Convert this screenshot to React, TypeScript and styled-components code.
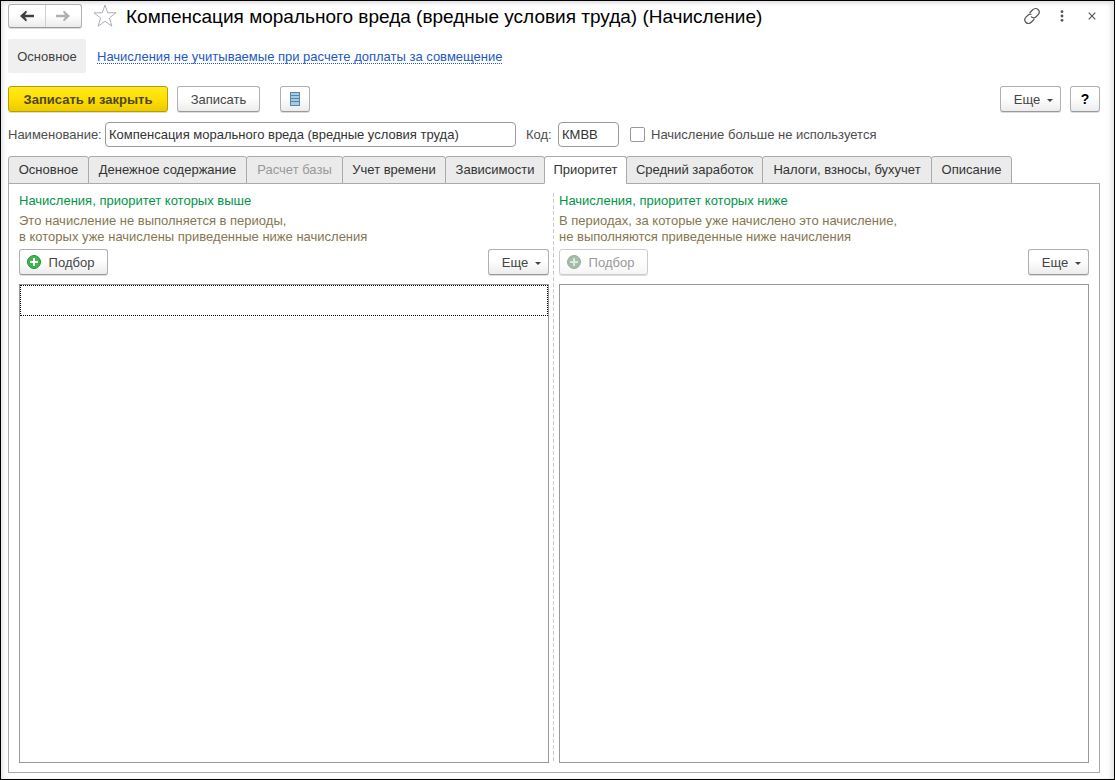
import React, { useState } from "react";
import styled, { createGlobalStyle, css } from "styled-components";

const GlobalStyle = createGlobalStyle`
  *, *::before, *::after { box-sizing: border-box; }
  body {
    margin: 0;
    background: #fff;
    color: #4d4d4d;
    font: 13px/16px "Liberation Sans", Arial, sans-serif;
  }
  button, input { font: inherit; color: inherit; margin: 0; }
`;

const Window = styled.main`
  display: flex;
  flex-direction: column;
  min-height: 100vh;
  margin-right: 1px;
  padding: 3px 14px 6px 7px;
  border: 1px solid #000;
  background: #fff;
  box-shadow: inset 0 4px 4px -2px #e0dce0, inset 4px 0 4px -2px #e8e4e6, inset -5px 0 5px -2px #e4e4e4;
`;

const TitleBar = styled.header`
  display: flex;
  align-items: center;
  height: 24px;
`;

const raised = css`
  border: 1px solid #b0b0b0;
  border-bottom-color: #999;
  border-radius: 3px;
  background: linear-gradient(#fff 0%, #fff 45%, #ececec 100%);
  box-shadow: 0 1px 0 #ddd;
`;

const History = styled.nav`
  ${raised}
  display: flex;
  width: 74px;
  height: 24px;
`;

const HistoryButton = styled.button`
  flex: 1;
  display: grid;
  place-items: center;
  padding: 0;
  border: 0;
  background: none;
  color: #404040;
  & + & { border-left: 1px solid #d0d0d0; }
  &:disabled { color: #b0b0b0; }
`;

const IconButton = styled.button`
  display: grid;
  place-items: center;
  width: 30px;
  height: 24px;
  padding: 0;
  border: 0;
  background: none;
  color: #555;
`;

const StarButton = styled(IconButton)`
  width: 24px;
  margin: 0 9px 0 11px;
`;

const Title = styled.h1`
  flex: 1;
  margin: 0;
  padding-top: 2px;
  color: #000;
  font-size: 19px;
  line-height: 24px;
  font-weight: 400;
  white-space: nowrap;
`;

const WindowTools = styled.div`
  display: flex;
  margin-right: -7px;
`;

const Sections = styled.nav`
  display: flex;
  align-items: center;
  gap: 11px;
  margin-top: 11px;
`;

const Section = styled.span`
  padding: 10px 0 8px;
  border-radius: 2px;
  background: #f0f0f0;
  color: #404040;
  width: 78px;
  text-align: center;
`;

const SectionLink = styled.a`
  padding-top: 2px;
  color: #2457c5;
  text-decoration: underline dotted 1px;
  text-decoration-skip-ink: none;
  text-underline-offset: 2px;
`;

const CommandBar = styled.div`
  display: flex;
  margin-top: 13px;
`;

const Button = styled.button<{ $width: number; $primary?: boolean }>`
  ${raised}
  display: flex;
  align-items: center;
  justify-content: center;
  width: ${(p) => p.$width}px;
  height: 26px;
  padding: 0;
  color: #444;
  line-height: 18px;
  white-space: nowrap;
  ${(p) =>
    p.$primary &&
    css`
      border-color: #b89c00;
      background: linear-gradient(#ffe924, #ffdf00 50%, #ecca00);
      color: #4d4622;
      font-weight: 700;
    `}
  &:disabled { color: #999; border-color: #ccc; background: linear-gradient(#fff 45%, #f5f5f5); }
`;

const ButtonText = styled.span`
  padding-top: 2px;
`;

const Group = styled.div<{ $gap: number }>`
  display: flex;
  gap: ${(p) => p.$gap}px;
  & + & { margin-left: 20px; }
`;

const EndGroup = styled.div`
  display: flex;
  gap: 9px;
  margin-left: auto;
`;

const Caret = styled.span`
  margin: 2px 0 0 7px;
  border: 3px solid transparent;
  border-top-color: currentColor;
  border-bottom: 0;
`;

const MoreLabel = styled(ButtonText)`
  margin-left: 6px;
`;

const HelpMark = styled.span`
  color: #000;
  font-size: 14px;
  font-weight: 700;
`;

const Fields = styled.div`
  display: flex;
  align-items: center;
  margin-top: 10px;
`;

const FieldLabel = styled.label`
  width: 97px;
  flex: none;
  white-space: nowrap;
`;

const CodeLabel = styled(FieldLabel)`
  width: 32px;
  margin-left: 10px;
`;

const TextInput = styled.input<{ $width: number }>`
  flex: 0 1 ${(p) => p.$width}px;
  min-width: 0;
  height: 25px;
  padding: 0 3px;
  border: 1px solid #999;
  border-radius: 4px;
  background: #fff;
  color: #333;
  outline: 0;
`;

const CheckLabel = styled.label`
  display: flex;
  align-items: center;
  gap: 6px;
  margin-left: 11px;
  white-space: nowrap;
`;

const Checkbox = styled.input`
  appearance: none;
  width: 15px;
  height: 15px;
  border: 1px solid #999;
  border-radius: 2px;
  background: #fff;
  &:checked { background: #888; }
`;

const TabList = styled.div`
  display: flex;
  margin-top: 9px;
`;

const Tab = styled.button<{ $width: number }>`
  position: relative;
  width: ${(p) => p.$width}px;
  height: 28px;
  margin-bottom: -1px;
  padding: 0;
  border: 1px solid #aaa;
  border-radius: 3px 3px 0 0;
  background: #ebebeb;
  color: #333;
  white-space: nowrap;
  & + & { margin-left: -1px; }
  &:disabled { color: #999; }
  &[aria-selected="true"] {
    border-bottom-color: #fff;
    background: #fff;
  }
`;

const Panel = styled.section`
  flex: 1;
  display: grid;
  grid-template-columns: 1fr 10px 1fr;
  padding: 9px 10px 9px;
  border: 1px solid #aaa;
`;

const Divider = styled.div`
  margin-left: 4px;
  width: 1px;
  background: repeating-linear-gradient(#ccc 0 4px, transparent 4px 6px);
`;

const Column = styled.div`
  display: flex;
  flex-direction: column;
  min-width: 0;
`;

const Heading = styled.h2`
  margin: 0 0 4px;
  color: #009646;
  font-size: 13px;
  line-height: 16px;
  font-weight: 400;
`;

const Note = styled.p`
  margin: 0;
  color: #85774f;
`;

const ColumnBar = styled.div`
  display: flex;
  justify-content: space-between;
  margin: 4px 0 9px;
`;

const PickLabel = styled(ButtonText)`
  margin: 0 6px 0 8px;
`;

const List = styled.div`
  flex: 1;
  border: 1px solid #999;
`;

const CurrentRow = styled.div`
  height: 31px;
  border: 1px dotted #000;
`;

const Arrow = ({ back }: { back?: boolean }) => (
  <svg width="14" height="12" viewBox="0 0 14 12" fill="currentColor">
    <path d={back ? "M0 6L6 .5L7 2L5 4.700H14V7.300H5L7 10L6 11.500z" : "M14 6L8 .5L7 2L9 4.700H0V7.300H9L7 10L8 11.500z"} />
  </svg>
);

const Star = () => (
  <svg width="24" height="24" viewBox="0 0 24 24" fill="none" stroke="#aaafb5">
    <path d="M12 1l2.700 7.800h8.300l-6.600 5.200 2.500 8.200-6.900-4.900-6.900 4.900 2.500-8.200-6.600-5.200h8.300z" />
  </svg>
);

const LinkIcon = () => (
  <svg width="18" height="18" viewBox="0 0 18 18" fill="none" stroke="currentColor" strokeWidth="1.200" strokeLinecap="round">
    <path d="M7 5.500L9.500 3C11.500 1 13.800 1.200 15 2.500C16.500 4 16.600 6.200 15 7.800L12.800 10C11.500 11.200 9.500 11 8.500 9.800" />
    <path d="M11 12.500L8.500 15C6.500 17 4.200 16.800 3 15.500C1.500 14 1.400 11.800 3 10.200L5.200 8C6 7.300 7 7 8 7.300" />
  </svg>
);

const Dots = () => (
  <svg width="4" height="12" viewBox="0 0 4 12" fill="currentColor">
    <circle cx="2" cy="1.700" r="1.400" />
    <circle cx="2" cy="6" r="1.400" />
    <circle cx="2" cy="10.300" r="1.400" />
  </svg>
);

const Cross = () => (
  <svg width="8" height="8" viewBox="0 0 8 8" stroke="currentColor" strokeWidth="1.200">
    <path d="M.7.7l6.600 6.600M7.300.7L.7 7.300" />
  </svg>
);

const ListIcon = () => (
  <svg width="10" height="14" viewBox="0 0 10 14">
    <rect width="10" height="14" fill="#5b87a6" />
    <path d="M1 2h8M1 5h8M1 8h8" stroke="#a9cbe2" strokeWidth="2" />
    <path d="M1 11.500h8" stroke="#a9cbe2" strokeWidth="3" />
  </svg>
);

const Plus = ({ muted }: { muted?: boolean }) => (
  <svg width="14" height="14" viewBox="0 0 14 14">
    <circle cx="7" cy="7" r="6.500" fill={muted ? "#a3bda8" : "#3fb54d"} stroke={muted ? "#96ae9b" : "#22903a"} />
    <path d="M7 3v8M3 7h8" stroke={muted ? "#dde6df" : "#fff"} strokeWidth="2" />
  </svg>
);

const More = () => (
  <Button type="button" $width={61} aria-haspopup="menu">
    <MoreLabel>Еще</MoreLabel>
    <Caret />
  </Button>
);

const tabs = [
  { name: "Основное", width: 81 },
  { name: "Денежное содержание", width: 159 },
  { name: "Расчет базы", width: 97, disabled: true },
  { name: "Учет времени", width: 104 },
  { name: "Зависимости", width: 100 },
  { name: "Приоритет", width: 83 },
  { name: "Средний заработок", width: 137 },
  { name: "Налоги, взносы, бухучет", width: 170 },
  { name: "Описание", width: 81 },
];

interface PriorityColumnProps {
  title: string;
  note: [string, string];
  disabled?: boolean;
  children?: React.ReactNode;
}

const PriorityColumn = ({ title, note, disabled, children }: PriorityColumnProps) => (
  <Column>
    <Heading>{title}</Heading>
    <Note>
      {note[0]}
      <br />
      {note[1]}
    </Note>
    <ColumnBar>
      <Button type="button" $width={89} disabled={disabled}>
        <Plus muted={disabled} />
        <PickLabel>Подбор</PickLabel>
      </Button>
      <More />
    </ColumnBar>
    <List aria-label={title}>{children}</List>
  </Column>
);

export default function App() {
  const [active, setActive] = useState("Приоритет");
  return (
    <>
      <GlobalStyle />
      <Window>
        <TitleBar>
          <History>
            <HistoryButton type="button" aria-label="Назад"><Arrow back /></HistoryButton>
            <HistoryButton type="button" aria-label="Вперед" disabled><Arrow /></HistoryButton>
          </History>
          <StarButton type="button" aria-label="Избранное"><Star /></StarButton>
          <Title>Компенсация морального вреда (вредные условия труда) (Начисление)</Title>
          <WindowTools>
            <IconButton type="button" aria-label="Ссылка"><LinkIcon /></IconButton>
            <IconButton type="button" aria-label="Меню"><Dots /></IconButton>
            <IconButton type="button" aria-label="Закрыть"><Cross /></IconButton>
          </WindowTools>
        </TitleBar>

        <Sections>
          <Section>Основное</Section>
          <SectionLink href="#combination">Начисления не учитываемые при расчете доплаты за совмещение</SectionLink>
        </Sections>

        <CommandBar>
          <Group $gap={9}>
            <Button type="button" $width={160} $primary><ButtonText>Записать и закрыть</ButtonText></Button>
            <Button type="button" $width={83}><ButtonText>Записать</ButtonText></Button>
          </Group>
          <Group $gap={9}>
            <Button type="button" $width={30} aria-label="Список"><ListIcon /></Button>
          </Group>
          <EndGroup>
            <More />
            <Button type="button" $width={30} aria-label="Справка"><HelpMark>?</HelpMark></Button>
          </EndGroup>
        </CommandBar>

        <Fields>
          <FieldLabel htmlFor="name">Наименование:</FieldLabel>
          <TextInput id="name" $width={411} defaultValue="Компенсация морального вреда (вредные условия труда)" />
          <CodeLabel htmlFor="code">Код:</CodeLabel>
          <TextInput id="code" $width={61} defaultValue="КМВВ" />
          <CheckLabel>
            <Checkbox type="checkbox" />
            Начисление больше не используется
          </CheckLabel>
        </Fields>

        <TabList role="tablist">
          {tabs.map((tab) => (
            <Tab
              key={tab.name}
              type="button"
              role="tab"
              $width={tab.width}
              disabled={tab.disabled}
              aria-selected={tab.name === active}
              onClick={() => setActive(tab.name)}
            >
              {tab.name}
            </Tab>
          ))}
        </TabList>

        <Panel role="tabpanel">
          <PriorityColumn
            title="Начисления, приоритет которых выше"
            note={["Это начисление не выполняется в периоды,", "в которых уже начислены приведенные ниже начисления"]}
          >
            <CurrentRow />
          </PriorityColumn>
          <Divider />
          <PriorityColumn
            title="Начисления, приоритет которых ниже"
            note={["В периодах, за которые уже начислено это начисление,", "не выполняются приведенные ниже начисления"]}
            disabled
          />
        </Panel>
      </Window>
    </>
  );
}
